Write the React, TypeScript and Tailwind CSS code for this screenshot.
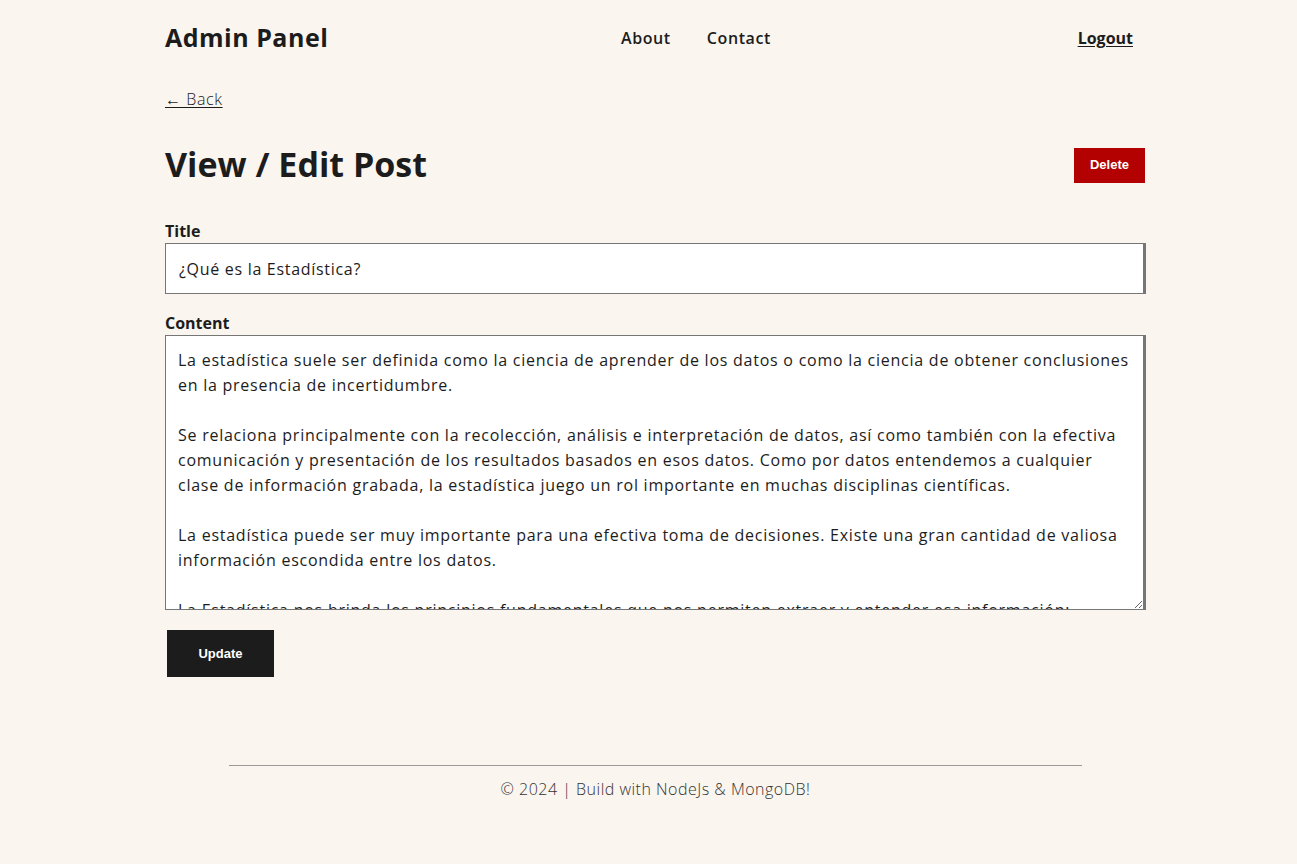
import React from "react";

const content = `La estadística suele ser definida como la ciencia de aprender de los datos o como la ciencia de obtener conclusiones en la presencia de incertidumbre.

Se relaciona principalmente con la recolección, análisis e interpretación de datos, así como también con la efectiva comunicación y presentación de los resultados basados en esos datos. Como por datos entendemos a cualquier clase de información grabada, la estadística juego un rol importante en muchas disciplinas científicas.

La estadística puede ser muy importante para una efectiva toma de decisiones. Existe una gran cantidad de valiosa información escondida entre los datos.

La Estadística nos brinda los principios fundamentales que nos permiten extraer y entender esa información; también nos proporciona las herramientas necesarias para verificar la calidad de nuestros datos y nuestra información.`;

export default function App() {
  return (
    <div className="min-h-[864px] bg-[#faf5ef] text-[#1c1c1c] font-['Open_Sans',sans-serif]">
      <div className="w-[981px] ml-[165px]">
        {/* Header */}
        <header className="flex items-center h-[76px]">
          <div className="w-[456px] text-[25px] font-bold tracking-[0.5px]">Admin Panel</div>
          <nav className="flex gap-[36px] text-[16px] font-semibold tracking-[0.6px]">
            <a href="#">About</a>
            <a href="#">Contact</a>
          </nav>
          <a href="#" className="ml-auto mr-[13px] text-[16px] font-bold underline underline-offset-2">
            Logout
          </a>
        </header>

        {/* Back */}
        <div className="mt-[11px] h-[24px] flex items-center">
          <a href="#" className="text-[16px] font-light tracking-[0.6px] underline underline-offset-2">
            ← Back
          </a>
        </div>

        {/* Title row */}
        <div className="mt-[24px] flex items-center justify-between h-[58px]">
          <h1 className="text-[34px] font-bold">View / Edit Post</h1>
          <button className="mt-[2px] mr-[1px] h-[35px] w-[71px] bg-[#b30000] text-white text-[13px] font-bold font-['Liberation_Sans',sans-serif]">
            Delete
          </button>
        </div>

        {/* Form */}
        <form className="mt-[26px] flex flex-col">
          <label className="text-[16px] font-bold leading-[24px]">Title</label>
          <input
            defaultValue="¿Qué es la Estadística?"
            className="h-[51px] px-[13px] bg-white border border-[#767676] border-r-[3px] text-[16px] tracking-[0.7px] outline-none"
          />
          <label className="mt-[17px] text-[16px] font-bold leading-[24px]">Content</label>
          <textarea
            defaultValue={content}
            className="h-[275px] px-[12px] pt-[12px] bg-white border border-[#767676] border-r-[3px] text-[16px] leading-[25px] tracking-[0.75px] outline-none resize-y overflow-hidden"
          />
          <div className="mt-[20px]">
            <button className="ml-[2px] h-[47px] w-[107px] bg-[#1c1c1c] text-white text-[13px] font-bold font-['Liberation_Sans',sans-serif]">
              Update
            </button>
          </div>
        </form>

        {/* Footer */}
        <footer className="mt-[88px] flex flex-col items-center">
          <div className="w-[853px] h-px bg-[#9a9a9a]" />
          <p className="mt-[11px] text-[16px] font-light tracking-[0.5px] text-[#333]">© 2024 | Build with NodeJs &amp; MongoDB!</p>
        </footer>
      </div>
    </div>
  );
}
